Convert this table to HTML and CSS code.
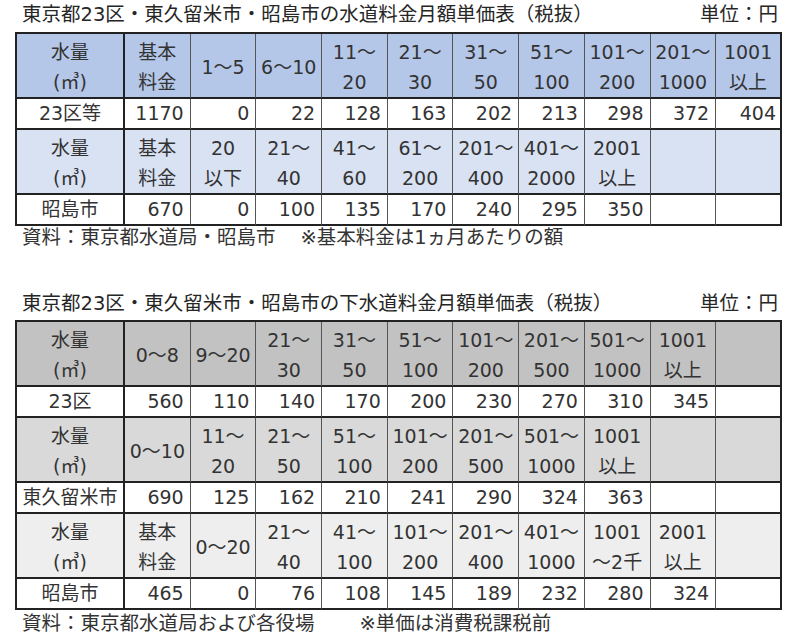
FILE: index.html
```html
<!DOCTYPE html>
<html lang="ja">
<head>
<meta charset="utf-8">
<link rel="stylesheet" href="styles.css">
</head>
<body>
<div class="page">
  <div class="title"><span>東京都23区・東久留米市・昭島市の水道料金月額単価表（税抜）</span><span class="unit">単位：円</span></div>
  <table class="grid blue">
    <colgroup><col class="c1"><col span="10"></colgroup>
    <tr class="hd h1">
      <td>水量<br>(㎥)</td><td>基本<br>料金</td><td>1～5</td><td>6～10</td><td>11～<br>20</td><td>21～<br>30</td><td>31～<br>50</td><td>51～<br>100</td><td>101～<br>200</td><td>201～<br>1000</td><td>1001<br>以上</td>
    </tr>
    <tr class="dt">
      <td>23区等</td><td>1170</td><td>0</td><td>22</td><td>128</td><td>163</td><td>202</td><td>213</td><td>298</td><td>372</td><td>404</td>
    </tr>
    <tr class="hd h2">
      <td>水量<br>(㎥)</td><td>基本<br>料金</td><td>20<br>以下</td><td>21～<br>40</td><td>41～<br>60</td><td>61～<br>200</td><td>201～<br>400</td><td>401～<br>2000</td><td>2001<br>以上</td><td></td><td></td>
    </tr>
    <tr class="dt">
      <td>昭島市</td><td>670</td><td>0</td><td>100</td><td>135</td><td>170</td><td>240</td><td>295</td><td>350</td><td></td><td></td>
    </tr>
  </table>
  <div class="note note1">資料：東京都水道局・昭島市<span class="gap1"></span>※基本料金は1ヵ月あたりの額</div>

  <div class="title title2"><span>東京都23区・東久留米市・昭島市の下水道料金月額単価表（税抜）</span><span class="unit">単位：円</span></div>
  <table class="grid gray">
    <colgroup><col class="c1"><col span="10"></colgroup>
    <tr class="hd h1">
      <td>水量<br>(㎥)</td><td>0～8</td><td>9～20</td><td>21～<br>30</td><td>31～<br>50</td><td>51～<br>100</td><td>101～<br>200</td><td>201～<br>500</td><td>501～<br>1000</td><td>1001<br>以上</td><td></td>
    </tr>
    <tr class="dt">
      <td>23区</td><td>560</td><td>110</td><td>140</td><td>170</td><td>200</td><td>230</td><td>270</td><td>310</td><td>345</td><td></td>
    </tr>
    <tr class="hd h2">
      <td>水量<br>(㎥)</td><td>0～10</td><td>11～<br>20</td><td>21～<br>50</td><td>51～<br>100</td><td>101～<br>200</td><td>201～<br>500</td><td>501～<br>1000</td><td>1001<br>以上</td><td></td><td></td>
    </tr>
    <tr class="dt">
      <td>東久留米市</td><td>690</td><td>125</td><td>162</td><td>210</td><td>241</td><td>290</td><td>324</td><td>363</td><td></td><td></td>
    </tr>
    <tr class="hd h3">
      <td>水量<br>(㎥)</td><td>基本<br>料金</td><td>0～20</td><td>21～<br>40</td><td>41～<br>100</td><td>101～<br>200</td><td>201～<br>400</td><td>401～<br>1000</td><td>1001<br>～2千</td><td>2001<br>以上</td><td></td>
    </tr>
    <tr class="dt">
      <td>昭島市</td><td>465</td><td>0</td><td>76</td><td>108</td><td>145</td><td>189</td><td>232</td><td>280</td><td>324</td><td></td>
    </tr>
  </table>
  <div class="note note2">資料：東京都水道局および各役場<span class="gap2"></span>※単価は消費税課税前</div>
</div>
</body>
</html>
```

FILE: styles.css
```css
html, body {
  margin: 0;
  padding: 0;
  background: #ffffff;
}
body {
  font-family: "DejaVu Sans", "Noto Sans CJK JP", sans-serif;
  color: #333333;
}
.page {
  width: 767px;
  padding-left: 15px;
}
.title {
  display: flex;
  justify-content: space-between;
  height: 32px;
  line-height: 30px;
  font-size: 19.5px;
  padding: 0 4px 0 7px;
  color: #262626;
  white-space: nowrap;
}
.title2 {
  margin-top: 38px;
  line-height: 32px;
}
.grid {
  width: 767px;
  box-sizing: border-box;
  table-layout: fixed;
  border-collapse: separate;
  border-spacing: 0;
  border-top: 2px solid #222;
  border-left: 2px solid #222;
  font-size: 19px;
}
.grid col.c1 {
  width: 108px;
}
.grid td {
  box-sizing: border-box;
  padding: 0;
  border-right: 1px solid #555;
  border-bottom: 2px solid #222;
  white-space: nowrap;
  overflow: hidden;
}
.grid td:first-child {
  border-right: 2px solid #222;
}
.grid td:last-child {
  border-right: 2px solid #222;
}
.hd td {
  text-align: center;
  line-height: 30px;
  padding-top: 3px;
  height: 65px;
}
.dt td {
  text-align: right;
  padding-right: 6px;
  line-height: 29px;
  height: 31px;
}
.dt td:first-child {
  text-align: center;
  padding-right: 0;
}
.dt td:last-child {
  padding-right: 4px;
}
.blue .h1 td { background: #b5c7e8; }
.blue .h2 td { background: #d9e2f3; }
.gray .h1 td { background: #c2c2c2; }
.gray .h2 td { background: #d9d9d9; }
.gray .h3 td { background: #eeeeee; }
.note {
  font-size: 19.5px;
  padding-left: 7px;
  white-space: nowrap;
}
.note1 {
  line-height: 24px;
}
.note2 {
  line-height: 28px;
}
.gap1 {
  display: inline-block;
  width: 25px;
}
.gap2 {
  display: inline-block;
  width: 45px;
}
```
